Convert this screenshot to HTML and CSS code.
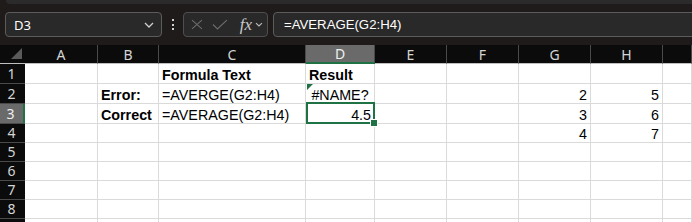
FILE: index.html
```html
<!DOCTYPE html>
<html lang="en">
<head>
    <meta charset="UTF-8">
    <title>Book1 - Excel</title>
    <link rel="stylesheet" href="styles.css">
</head>
<body>
    <div class="top-strip"></div>

    <div class="formula-bar">
        <div class="name-box">
            <span>D3</span>
            <svg class="chev" width="10" height="6" viewBox="0 0 10 6"><path d="M1 1l4 4 4-4" /></svg>
        </div>
        <div class="dots"><i></i><i></i><i></i></div>
        <div class="fx-box">
            <svg width="12" height="11" viewBox="0 0 12 11"><path d="M1 1l10 9M11 1L1 10" /></svg>
            <svg width="16" height="11" viewBox="0 0 16 11"><path d="M1 5.5l4.5 4.5L15 1" /></svg>
            <span class="fx">fx</span>
            <svg class="chev small" width="8" height="5" viewBox="0 0 8 5"><path d="M1 1l3 3 3-3" /></svg>
        </div>
        <div class="formula-input">=AVERAGE(G2:H4)</div>
    </div>

    <div class="sheet" id="sheet"></div>

    <script>
        // column letters, row count and the filled cells
        const cols = ['A', 'B', 'C', 'D', 'E', 'F', 'G', 'H', ''];
        const rows = 8;
        const selected = { col: 'D', row: 3 };

        const data = {
            C1: { text: 'Formula Text', bold: true },
            D1: { text: 'Result', bold: true },
            B2: { text: 'Error:', bold: true },
            C2: { text: '=AVERGE(G2:H4)' },
            D2: { text: '#NAME?', error: true },
            G2: { text: 2 }, H2: { text: 5 },
            B3: { text: 'Correct', bold: true },
            C3: { text: '=AVERAGE(G2:H4)' },
            D3: { text: 4.5 },
            G3: { text: 3 }, H3: { text: 6 },
            G4: { text: 4 }, H4: { text: 7 }
        };

        function buildRow(label, r) {
            const active = r === selected.row ? ' active' : '';
            let html = `<div class="row-head${active}">${label}</div>`;
            cols.forEach(c => {
                const cell = data[c + r];
                let cls = 'cell';
                let text = '';
                if (cell) {
                    text = cell.text;
                    if (cell.bold) cls += ' bold';
                    if (typeof cell.text === 'number') cls += ' num';
                    if (cell.error) cls += ' error';
                }
                if (c === selected.col && r === selected.row) cls += ' selected';
                html += `<div class="${cls}">${text}</div>`;
            });
            return html;
        }

        function buildSheet() {
            const sheet = document.getElementById('sheet');
            let html = '<div class="corner"></div>';

            cols.forEach(c => {
                const active = c === selected.col ? ' active' : '';
                html += `<div class="col-head${active}">${c}</div>`;
            });

            for (let r = 1; r <= rows; r++) {
                html += buildRow(r, r);
            }
            // next row only peeks in at the bottom edge
            html += buildRow('', rows + 1);
            sheet.innerHTML = html;
        }

        buildSheet();
    </script>
</body>
</html>
```

FILE: styles.css
```css
* {
    margin: 0;
    padding: 0;
    box-sizing: border-box;
}

body {
    background-color: #1f1b1a;
    font-family: 'Liberation Sans', Arial, sans-serif;
    overflow: hidden;
}

.top-strip {
    height: 4px;
    margin-left: 6px;
    background: #2b2b2b;
    border-bottom-left-radius: 4px;
}

/* formula bar */
.formula-bar {
    display: flex;
    align-items: center;
    height: 41px;
    padding: 8px 0 8px 5px;
}

.name-box {
    width: 157px;
    height: 25px;
    display: flex;
    align-items: center;
    justify-content: space-between;
    padding: 0 7px 0 8px;
    background: #292929;
    border: 1px solid #5c5c5c;
    border-radius: 4px;
    color: #fff;
    font-family: 'Noto Sans', sans-serif;
    font-size: 13px;
}

.chev path {
    fill: none;
    stroke: #cfcfcf;
    stroke-width: 1.3;
}

.chev.small path {
    stroke: #bdbdbd;
    stroke-width: 1.1;
}

.dots {
    width: 21px;
    display: flex;
    flex-direction: column;
    align-items: center;
    gap: 2.5px;
}

.dots i {
    width: 2px;
    height: 2px;
    background: #d0d0d0;
}

.fx-box {
    width: 85px;
    height: 25px;
    display: flex;
    align-items: center;
    padding: 0 4px 0 7px;
    background: #292929;
    border: 1px solid #4e4e4e;
    border-radius: 4px;
}

.fx-box svg path {
    fill: none;
    stroke: #6c6c6c;
    stroke-width: 1.1;
}

.fx-box svg + svg {
    margin-left: 9px;
}

.fx {
    margin-left: 12px;
    margin-right: 3px;
    color: #c9c9c9;
    font-family: 'Liberation Serif', serif;
    font-style: italic;
    font-size: 17px;
    line-height: 1;
}

.fx-box .chev.small path {
    stroke: #bdbdbd;
}

.formula-input {
    flex: 1;
    height: 25px;
    margin-left: 5px;
    margin-right: -8px;
    padding-left: 10px;
    display: flex;
    align-items: center;
    background: #292929;
    border: 1px solid #5c5c5c;
    border-radius: 4px;
    color: #fff;
    font-size: 13.2px;
}

/* grid */
.sheet {
    display: grid;
    grid-template-columns: 25px 73px 61px 147px 69px 72px 72px 72px 72px 1fr;
    grid-template-rows: 19px 20px 20px 20px 19px 19px 19px 19px 19px 19px;
    background: #fff;
}

.corner,
.col-head,
.row-head {
    background: #0b0b0b;
    color: #d4d4d4;
    font-family: 'Noto Sans', sans-serif;
    font-size: 14px;
}

.corner {
    position: relative;
    border-bottom: 1px solid #bfbfbf;
}

.corner::after {
    content: '';
    position: absolute;
    right: 3px;
    bottom: 4px;
    border-left: 11px solid transparent;
    border-bottom: 11px solid #5a5a5a;
}

.col-head {
    display: flex;
    align-items: center;
    justify-content: center;
    border-right: 1px solid #4a4a4a;
    border-bottom: 1px solid #bfbfbf;
}

.col-head.active {
    background: #6a6a6a;
    color: #f0f0f0;
    border-bottom: 2px solid #1f7244;
}

.row-head {
    display: flex;
    align-items: flex-end;
    justify-content: center;
    padding-right: 2px;
    padding-bottom: 1px;
    line-height: 16px;
    border-bottom: 1px solid #4a4a4a;
}

.row-head.active {
    background: #6a6a6a;
    color: #f0f0f0;
    border-right: 2px solid #1f7244;
}

.cell {
    position: relative;
    display: flex;
    align-items: flex-end;
    padding: 0 3px 0 3px;
    border-right: 1px solid #dadada;
    border-bottom: 1px solid #dadada;
    color: #000;
    font-size: 14.3px;
    white-space: nowrap;
}

.cell.bold {
    font-weight: bold;
}

.cell.num {
    justify-content: flex-end;
}

.cell.error {
    justify-content: center;
}

.cell.error::before {
    content: '';
    position: absolute;
    top: 0;
    left: 1px;
    border-top: 6px solid #1f7244;
    border-right: 6px solid transparent;
}

.cell.selected::after {
    content: '';
    position: absolute;
    top: -2px;
    left: 0;
    right: -1px;
    bottom: -1px;
    border: 2px solid #1f7244;
}

.cell.selected::before {
    content: '';
    position: absolute;
    right: -4px;
    bottom: -4px;
    width: 6px;
    height: 6px;
    background: #1f7244;
    border: 1px solid #fff;
    z-index: 1;
}
```
